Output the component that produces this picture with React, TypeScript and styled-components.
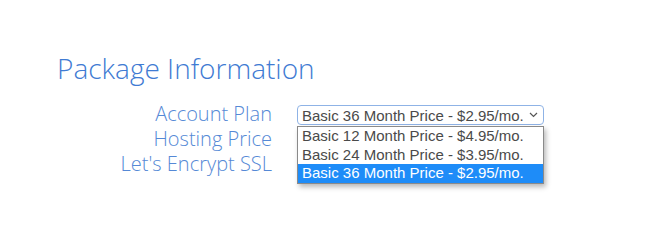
import React from "react";
import styled, { createGlobalStyle } from "styled-components";

const Global = createGlobalStyle`
  html, body { margin: 0; padding: 0; background: #ffffff; }
  body { width: 645px; height: 241px; overflow: hidden; }
`;

const Page = styled.div`
  padding: 48px 0 0 57px;
  font-family: "Open Sans", sans-serif;
`;

const Heading = styled.h2`
  margin: 0;
  font-size: 28px;
  font-weight: 300;
  line-height: 41px;
  color: #3f7bd3;
`;

const Form = styled.div`
  display: grid;
  grid-template-columns: 215px 247px;
  column-gap: 25px;
  margin-top: 12px;
  align-items: start;
`;

const Labels = styled.div`
  display: flex;
  flex-direction: column;
  align-items: flex-end;
`;

const Label = styled.div`
  font-size: 20px;
  font-weight: 300;
  line-height: 25px;
  color: #5589d6;
  white-space: nowrap;
`;

const SelectWrap = styled.div`
  position: relative;
  margin-top: 4px;
`;

const SelectBox = styled.div`
  box-sizing: border-box;
  height: 20px;
  border: 1px solid #8fb3e6;
  border-radius: 4px;
  display: flex;
  align-items: center;
  justify-content: space-between;
  padding: 0 5px 0 4px;
  font-family: "Liberation Sans", Arial, sans-serif;
  font-size: 15px;
  color: #4a4a4a;
  background: #fff;
`;

const Value = styled.span`
  white-space: nowrap;
`;

const DropList = styled.ul`
  position: absolute;
  top: 21px;
  left: 0;
  width: 247px;
  box-sizing: border-box;
  margin: 0;
  padding: 0;
  list-style: none;
  background: #fff;
  border: 1px solid #8a8a8a;
  box-shadow: 2px 3px 5px rgba(0, 0, 0, 0.28);
`;

const Option = styled.li<{ $selected?: boolean }>`
  height: 18.7px;
  line-height: 18.7px;
  padding: 0 4px;
  font-family: "Liberation Sans", Arial, sans-serif;
  font-size: 15px;
  white-space: nowrap;
  color: ${(p) => (p.$selected ? "#ffffff" : "#4a4a4a")};
  background: ${(p) => (p.$selected ? "#1e8cf8" : "transparent")};
`;

const options = [
  "Basic 12 Month Price - $4.95/mo.",
  "Basic 24 Month Price - $3.95/mo.",
  "Basic 36 Month Price - $2.95/mo.",
];

export default function App() {
  return (
    <>
      <Global />
      <Page>
        <Heading>Package Information</Heading>
        <Form>
          <Labels>
            <Label>Account Plan</Label>
            <Label>Hosting Price</Label>
            <Label>Let's Encrypt SSL</Label>
          </Labels>
          <SelectWrap>
            <SelectBox>
              <Value>{options[2]}</Value>
              <svg width="9" height="6" viewBox="0 0 9 6">
                <path d="M1 1 L4.5 4.5 L8 1" fill="none" stroke="#555" strokeWidth="1.2" />
              </svg>
            </SelectBox>
            <DropList>
              {options.map((o, i) => (
                <Option key={o} $selected={i === 2}>
                  {o}
                </Option>
              ))}
            </DropList>
          </SelectWrap>
        </Form>
      </Page>
    </>
  );
}
